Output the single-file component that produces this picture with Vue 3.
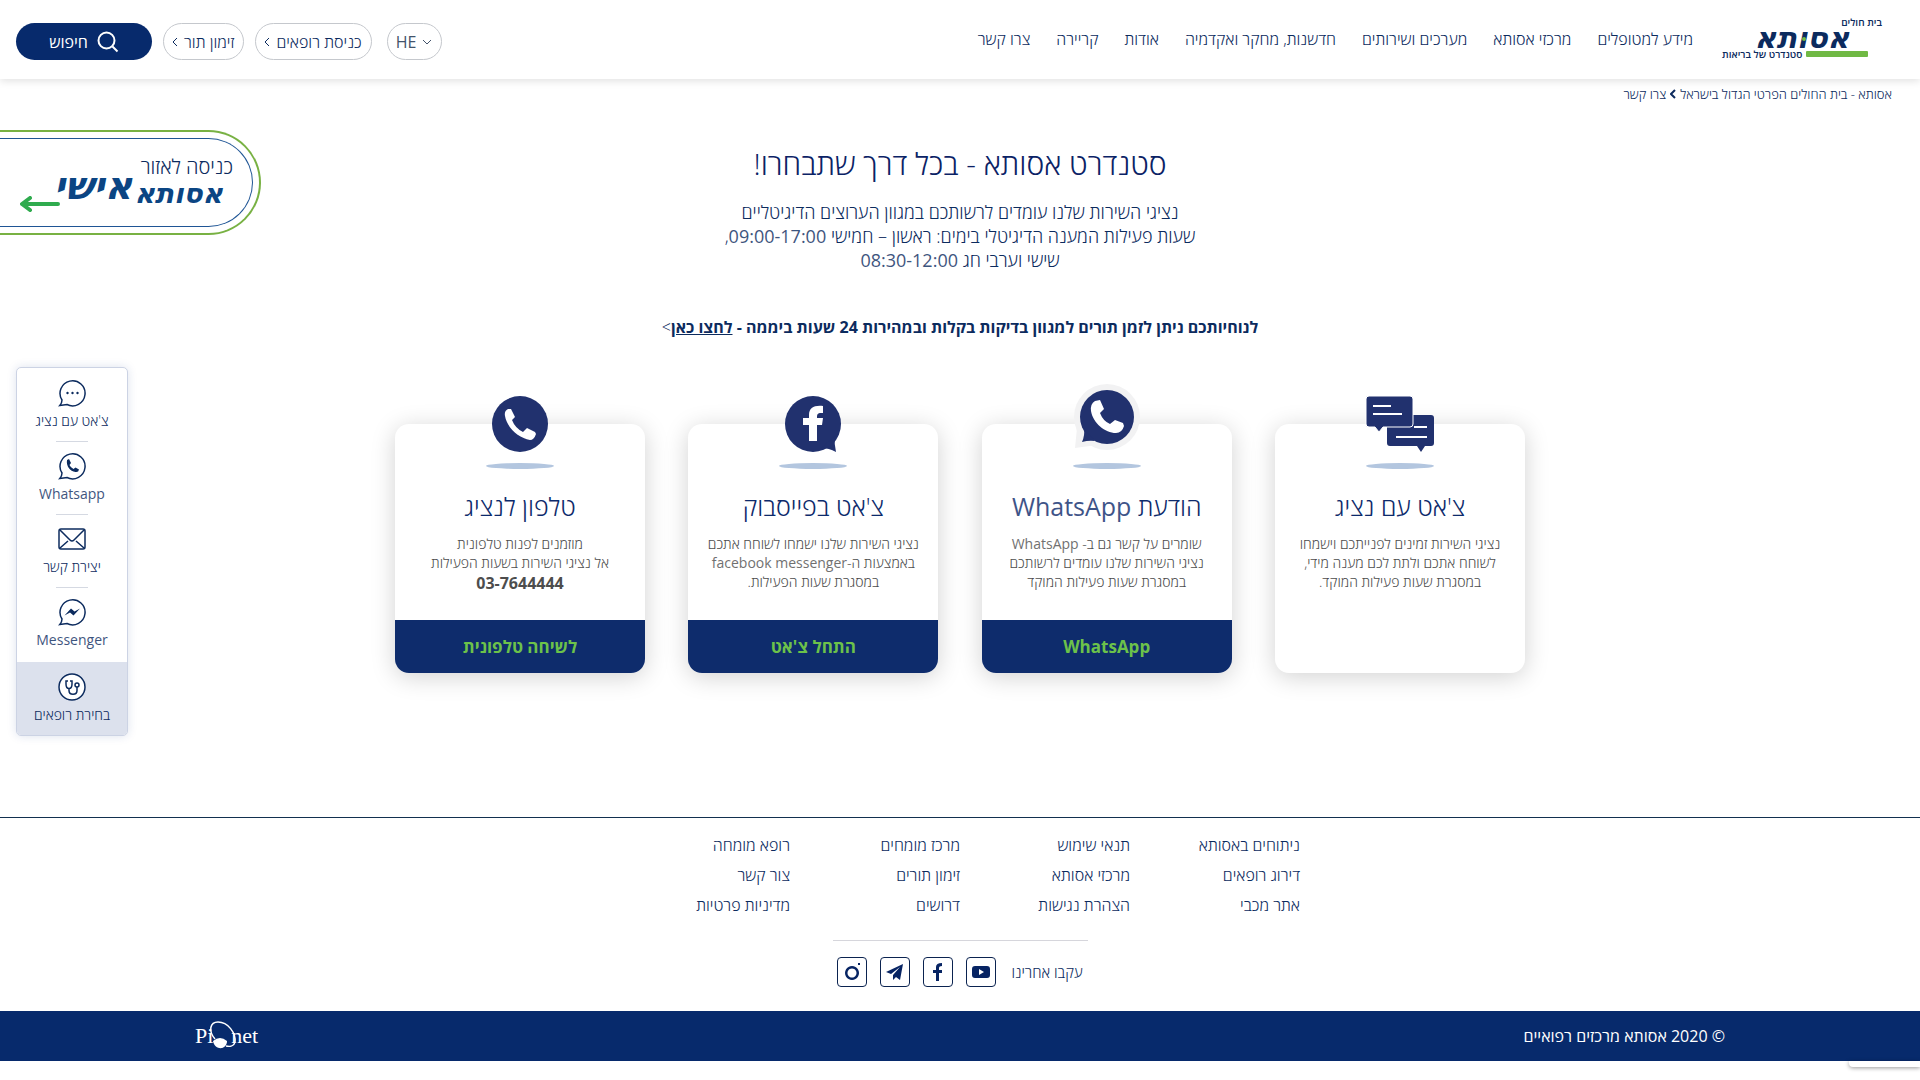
<template>
  <div class="page" dir="rtl" lang="he">
    <header class="top-bar">
      <a href="#" class="logo" aria-label="אסותא">
        <span class="logo-over">בית חולים</span>
        <span class="logo-word">אסותא</span>
        <span class="logo-under"><i class="logo-line"></i>סטנדרט של בריאות</span>
      </a>
      <nav class="main-nav">
        <a v-for="item in navItems" :key="item" href="#">{{ item }}</a>
      </nav>
      <div class="actions">
        <button type="button" class="pill lang">
          <svg width="10" height="6" viewBox="0 0 10 6"><path d="M1 1l4 4 4-4" /></svg>
          HE
        </button>
        <a href="#" class="pill">
          כניסת רופאים
          <svg width="6" height="10" viewBox="0 0 6 10"><path d="M5 1L1 5l4 4" /></svg>
        </a>
        <a href="#" class="pill">
          זימון תור
          <svg width="6" height="10" viewBox="0 0 6 10"><path d="M5 1L1 5l4 4" /></svg>
        </a>
        <button type="button" class="search">
          <svg width="22" height="22" viewBox="0 0 22 22"><circle cx="9.500" cy="9.500" r="8" /><path d="M15.500 15.500l5 5" /></svg>
          חיפוש
        </button>
      </div>
    </header>

    <nav class="breadcrumb" aria-label="breadcrumb">
      <a href="#">אסותא - בית החולים הפרטי הגדול בישראל</a>
      <svg width="6" height="10" viewBox="0 0 6 10"><path d="M5 1L1 5l4 4" /></svg>
      <span>צרו קשר</span>
    </nav>

    <a href="#" class="personal">
      <span class="personal-inner">
        <span class="personal-title">כניסה לאזור</span>
        <span class="personal-logo">
          <span class="word-small">אסותא</span>
          <span class="word-big">אישי</span>
        </span>
        <svg class="personal-arrow" width="40" height="16" viewBox="0 0 40 16"><path d="M38 8H3M10 2L2 8l8 6" /></svg>
      </span>
    </a>

    <aside class="side-menu">
      <a v-for="item in sideItems" :key="item.icon" href="#" class="side-item" :class="{ active: item.icon === 'doctor' }">
        <svg width="28" height="28" viewBox="0 0 28 28">
          <template v-if="item.icon === 'mail'">
            <rect x="1" y="4" width="26" height="20" rx="2" />
            <path d="M2 5l10 10q2 2 4 0L26 5M2 23l8-7M26 23l-8-7" />
          </template>
          <template v-else-if="item.icon === 'doctor'">
            <circle cx="14" cy="14" r="13" />
            <path d="M10 8H8v3c0 6 6 6 6 0V8h-2M11 15.500v2c0 5 8 5 8 0V14" />
            <circle cx="19" cy="12" r="2" />
          </template>
          <template v-else>
            <path d="M4 21A12.500 12.500 0 1 1 9 25.500L1.800 26.500Q4 24 4 21z" />
            <g v-if="item.icon === 'chat'" class="solid">
              <circle cx="9.500" cy="14" r="1.200" /><circle cx="14.500" cy="14" r="1.200" /><circle cx="19.500" cy="14" r="1.200" />
            </g>
            <path v-if="item.icon === 'whatsapp'" class="solid" d="M9 8l2-1 2 4-1.500 2q1 2.500 4 4l2-1.500 3.500 2q-.500 3-3.500 2.500C12 19.500 8 14 9 8z" />
            <path v-if="item.icon === 'messenger'" class="solid" d="M6.500 17.500l6.500-7 3.500 3 5.500-3-6.500 7-3.500-3z" />
          </template>
        </svg>
        <span :class="{ latin: isLatin(item.label) }">{{ item.label }}</span>
      </a>
    </aside>

    <main class="content">
      <h1>סטנדרט אסותא - בכל דרך שתבחרו!</h1>
      <p class="intro">
        נציגי השירות שלנו עומדים לרשותכם במגוון הערוצים הדיגיטליים<br />
        שעות פעילות המענה הדיגיטלי בימים: ראשון – חמישי <span class="latin">09:00-17:00</span>,<br />
        שישי וערבי חג <span class="latin">08:30-12:00</span>
      </p>
      <p class="notice">
        <b>לנוחיותכם ניתן לזמן תורים למגוון בדיקות בקלות ובמהירות 24 שעות ביממה - <a href="#">לחצו כאן</a></b>&gt;
      </p>

      <section class="cards">
        <article v-for="card in cards" :key="card.icon" class="card">
          <svg class="card-icon" width="80" height="88" viewBox="0 0 80 88">
            <g v-if="card.icon === 'chat'">
              <g class="badge">
                <path d="M30 27h41a3 3 0 0 1 3 3v25a3 3 0 0 1-3 3h-6l-4 6-4-6H30a3 3 0 0 1-3-3V30a3 3 0 0 1 3-3z" />
                <path class="front" d="M9 8h41a3 3 0 0 1 3 3v25a3 3 0 0 1-3 3H23l-4 5-4-5H9a3 3 0 0 1-3-3V11a3 3 0 0 1 3-3z" />
              </g>
              <path class="lines" d="M13 18h18M13 26h29M54 39h13M36 49h31" />
            </g>
            <g v-if="card.icon === 'whatsapp'">
              <circle class="halo" cx="40" cy="29" r="33" />
              <path class="halo" d="M10 40l-2 20 22-3z" />
              <circle class="badge" cx="40" cy="29" r="27" />
              <path class="badge" d="M17 41q1 6-2 13 7-2 13-1z" />
              <path class="white" d="M28 13q-5 3-4 10c2 12 14 22 25 22q6 0 8-7l-1-3-8-3-5 4q-7-3-10-11l4-4-4-9z" />
            </g>
            <g v-if="card.icon === 'facebook'">
              <circle class="badge" cx="40" cy="36" r="28" />
              <path class="badge" d="M48 60q8 0 15 4-2-8-1-16z" />
              <path class="white" d="M36 53V37h-6v-7h6v-3c0-7 5-10 14-9v7c-5 0-6 0-6 5h6l-1 7h-5v16z" />
            </g>
            <g v-if="card.icon === 'phone'">
              <circle class="badge" cx="40" cy="36" r="28" />
              <path class="white" d="M28 21q-4 2-3 7c2 12 14 22 25 24q4 0 6-6l-1-2-8-4-4 4q-8-4-11-12l3-3-4-8z" />
            </g>
            <ellipse class="shade" cx="40" cy="78" rx="34" ry="3" />
          </svg>
          <h2>
            <span v-for="part in splitLatin(card.title)" :key="part" :class="{ latin: isLatin(part) }">{{ part }}</span>
          </h2>
          <p>
            <template v-for="line in card.lines" :key="line">
              <span v-for="part in splitLatin(line)" :key="part" :class="{ latin: isLatin(part) }">{{ part }}</span><br />
            </template>
            <strong v-if="card.phone">{{ card.phone }}</strong>
          </p>
          <a v-if="card.action" href="#" class="card-action">{{ card.action }}</a>
        </article>
      </section>
    </main>

    <footer>
      <div class="footer-links">
        <ul v-for="(column, i) in footerColumns" :key="i">
          <li v-for="link in column" :key="link"><a href="#">{{ link }}</a></li>
        </ul>
      </div>
      <div class="social">
        <span>עקבו אחרינו</span>
        <a v-for="(path, name) in socialIcons" :key="name" href="#" :aria-label="name">
          <svg width="20" height="20" viewBox="0 0 20 20"><path :d="path" fill-rule="evenodd" /></svg>
        </a>
      </div>
      <div class="bottom-bar">
        <span>© 2020 אסותא מרכזים רפואיים</span>
        <a href="#" class="pionet" dir="ltr" aria-label="Pionet">
          Pi<svg width="18" height="30" viewBox="0 0 18 30">
            <path d="M0 20q7-6 14 0c0 9-12 10-14 0z" fill="#fff" />
            <path d="M2 18C-5 10-3 1 5 1c10 0 18 11 17 20-1 4-5 5-9 4" fill="none" stroke="#fff" stroke-width="1.500" />
          </svg>net
        </a>
      </div>
    </footer>
    <div class="corner-tab"></div>
  </div>
</template>

<script setup>
const navItems = ['מידע למטופלים', 'מרכזי אסותא', 'מערכים ושירותים', 'חדשנות, מחקר ואקדמיה', 'אודות', 'קריירה', 'צרו קשר'];

const sideItems = [
  { icon: 'chat', label: "צ'אט עם נציג" },
  { icon: 'whatsapp', label: 'Whatsapp' },
  { icon: 'mail', label: 'יצירת קשר' },
  { icon: 'messenger', label: 'Messenger' },
  { icon: 'doctor', label: 'בחירת רופאים' }
];

const cards = [
  {
    icon: 'chat',
    title: "צ'אט עם נציג",
    lines: ['נציגי השירות זמינים לפנייתכם וישמחו', 'לשוחח אתכם ולתת לכם מענה מידי,', 'במסגרת שעות פעילות המוקד.']
  },
  {
    icon: 'whatsapp',
    title: 'הודעת WhatsApp',
    lines: ['שומרים על קשר גם ב- WhatsApp', 'נציגי השירות שלנו עומדים לרשותכם', 'במסגרת שעות פעילות המוקד'],
    action: 'WhatsApp'
  },
  {
    icon: 'facebook',
    title: "צ'אט בפייסבוק",
    lines: ['נציגי השירות שלנו ישמחו לשוחח אתכם', 'באמצעות ה-facebook messenger', 'במסגרת שעות הפעילות.'],
    action: "התחל צ'אט"
  },
  {
    icon: 'phone',
    title: 'טלפון לנציג',
    lines: ['מוזמנים לפנות טלפונית', 'אל נציגי השירות בשעות הפעילות'],
    phone: '03-7644444',
    action: 'לשיחה טלפונית'
  }
];

const footerColumns = [
  ['ניתוחים באסותא', 'דירוג רופאים', 'אתר מכבי'],
  ['תנאי שימוש', 'מרכזי אסותא', 'הצהרת נגישות'],
  ['מרכז מומחים', 'זימון תורים', 'דרושים'],
  ['רופא מומחה', 'צור קשר', 'מדיניות פרטיות']
];

const socialIcons = {
  YouTube: 'M4 4h12q3 0 3 3v6q0 3-3 3H4q-3 0-3-3V7q0-3 3-3zM8 7v6l5-3z',
  Facebook: 'M8 19v-8H5V8h3V5q0-4 6-4v3q-3 0-3 2v2h3v3h-3v8z',
  Telegram: 'M18 2L1 10l5 2 9-7-7 8v5l3-3 4 3z',
  Instagram: 'M10 4a7 7 0 1 0 .01 0zM10 6.500a4.500 4.500 0 1 1-.01 0zM16 1h2v2h-2z'
};

// latin runs are set one weight heavier than the light hebrew
function isLatin(text) {
  return /^[a-z]/i.test(text);
}

function splitLatin(text) {
  return text.split(/([a-z][a-z ]*)/i).filter(Boolean);
}
</script>

<style>
body {
  margin: 0;
  background: #fff;
}
</style>

<style scoped>
.page {
  position: relative;
  min-height: 100vh;
  font-family: "Open Sans", "Liberation Sans", sans-serif;
  font-size: 16px;
  font-weight: 300;
  color: #0c2b5e;
}

a {
  color: inherit;
  text-decoration: none;
}

button {
  font: inherit;
  color: inherit;
  cursor: pointer;
}

svg {
  flex: none;
  fill: none;
  stroke: currentColor;
}

.latin {
  font-weight: 400;
  opacity: 0.8;
}

.top-bar {
  display: flex;
  align-items: center;
  height: 79px;
  padding: 0 38px 0 16px;
  box-sizing: border-box;
  box-shadow: 0 2px 8px rgba(0, 0, 0, 0.12);
}

.logo {
  display: flex;
  flex-direction: column;
  width: 160px;
  font-size: 10px;
  font-weight: 600;
  line-height: 10px;
}

.logo-over {
  margin-top: -4px;
}

.logo-word {
  position: relative;
  font-family: "DejaVu Sans", sans-serif;
  font-size: 30px;
  font-weight: 700;
  font-style: italic;
  line-height: 22px;
  text-align: center;
}

.logo-word::after {
  content: "";
  position: absolute;
  top: 10px;
  left: 80px;
  width: 4px;
  height: 4px;
  border-radius: 50%;
  background: #70b944;
}

.logo-under {
  display: flex;
  align-items: center;
  justify-content: flex-end;
  gap: 4px;
  white-space: nowrap;
}

.logo-line {
  width: 62px;
  height: 6px;
  background: #70b944;
  border-radius: 1px;
}

.main-nav {
  display: flex;
  gap: 26px;
  margin-right: 29px;
  padding-bottom: 2px;
}

.actions {
  display: flex;
  align-items: center;
  gap: 11px;
  margin-right: auto;
  padding-top: 4px;
}

.pill {
  display: flex;
  align-items: center;
  gap: 6px;
  height: 37px;
  padding: 0 9px 0 8px;
  box-sizing: border-box;
  border: 1px solid #c5c8cd;
  border-radius: 19px;
  background: #fff;
}

.lang {
  margin-left: 4px;
  font-weight: 400;
  color: #43536b;
}

.search {
  display: flex;
  align-items: center;
  justify-content: center;
  gap: 9px;
  width: 136px;
  height: 37px;
  padding: 0;
  border: 0;
  border-radius: 19px;
  background: #072a6c;
  color: #fff;
  font-weight: 400;
}

.search svg {
  stroke-width: 2;
}

.breadcrumb {
  display: flex;
  align-items: center;
  gap: 4px;
  padding: 6px 28px 0;
  font-size: 13px;
  line-height: 18px;
}

.breadcrumb svg {
  stroke-width: 2;
}

.personal {
  position: absolute;
  top: 130px;
  left: 0;
  width: 261px;
  height: 105px;
  padding: 6px 6px 6px 0;
  box-sizing: border-box;
  border: 2px solid #78b143;
  border-left: 0;
  border-radius: 0 53px 53px 0;
}

.personal-inner {
  position: relative;
  display: flex;
  flex-direction: column;
  height: 100%;
  padding: 14px 19px 0 0;
  box-sizing: border-box;
  border: 1px solid #1f5595;
  border-left: 0;
  border-radius: 0 45px 45px 0;
}

.personal-title {
  font-size: 20px;
  line-height: 28px;
}

.personal-logo {
  display: flex;
  align-items: flex-start;
  gap: 2px;
  padding-right: 10px;
  font-family: "DejaVu Sans", sans-serif;
  font-weight: 700;
  font-style: italic;
  line-height: 26px;
  color: #0b4583;
}

.word-small {
  font-size: 28px;
}

.word-big {
  font-size: 38px;
  line-height: 10px;
}

.personal-arrow {
  position: absolute;
  left: 20px;
  bottom: 14px;
  stroke: #2fab4e;
  stroke-width: 4;
  stroke-linecap: round;
  stroke-linejoin: round;
}

.side-menu {
  position: absolute;
  top: 367px;
  left: 16px;
  width: 112px;
  box-sizing: border-box;
  border: 1px solid #ccd3e4;
  border-radius: 5px;
  background: #fff;
  box-shadow: 0 0 10px rgba(30, 60, 140, 0.15);
  overflow: hidden;
}

.side-item {
  display: flex;
  flex-direction: column;
  align-items: center;
  gap: 3px;
  height: 73px;
  padding-top: 11px;
  box-sizing: border-box;
  font-size: 14px;
  line-height: 22px;
}

.side-item:not(:first-child):not(.active) {
  background: linear-gradient(#d5d9e2, #d5d9e2) center top / 32px 1px no-repeat;
}

.side-item svg {
  stroke-width: 1.5;
}

.side-item .solid {
  fill: currentColor;
  stroke: none;
}

.active {
  margin-top: 2px;
  background: #dce1ed;
}

.active svg circle:first-child {
  fill: #fff;
}

.content {
  display: flex;
  flex-direction: column;
  align-items: center;
  padding: 39px 0 144px;
  text-align: center;
}

h1 {
  margin: 0;
  font-size: 30px;
  font-weight: 300;
  line-height: 44px;
  color: #0b2265;
}

.intro {
  margin: 14px 0 0;
  font-size: 18px;
  line-height: 24px;
}

.notice {
  margin: 43px 0 0;
  font-size: 16px;
  line-height: 24px;
}

.notice b {
  font-weight: 700;
}

.notice a {
  text-decoration: underline;
}

.cards {
  display: flex;
  justify-content: space-between;
  width: 1130px;
  max-width: 100%;
  margin-top: 85px;
}

.card {
  position: relative;
  display: flex;
  flex-direction: column;
  width: 250px;
  height: 249px;
  padding-top: 62px;
  box-sizing: border-box;
  border-radius: 14px;
  background: #fff;
  box-shadow: 0 4px 24px rgba(0, 0, 0, 0.18);
}

.card-icon {
  position: absolute;
  top: -36px;
  left: 85px;
  overflow: visible;
  stroke: none;
}

.badge {
  fill: #21316e;
}

.front {
  stroke: #fff;
  stroke-width: 1;
}

.white {
  fill: #fff;
}

.halo {
  fill: #f2f2f3;
}

.lines {
  stroke: #fff;
  stroke-width: 2;
}

.shade {
  fill: #b3c6df;
}

.card h2 {
  margin: 0;
  font-size: 25px;
  font-weight: 300;
  line-height: 40px;
  color: #0d2a6b;
}

.card p {
  margin: 8px 0 0;
  font-size: 14px;
  line-height: 19px;
  color: #4d4d4d;
  white-space: nowrap;
}

.card strong {
  font-size: 16px;
  font-weight: 700;
  line-height: 22px;
}

.card-action {
  margin-top: auto;
  border-radius: 0 0 14px 14px;
  background: #0e2c6c;
  font-size: 17px;
  font-weight: 700;
  line-height: 53px;
  color: #6cc24a;
}

footer {
  border-top: 1px solid #12304f;
}

.footer-links {
  display: grid;
  grid-template-columns: repeat(4, 170px);
  justify-content: center;
  padding: 12px 0 20px;
}

ul {
  margin: 0;
  padding: 0;
  list-style: none;
}

li {
  line-height: 30px;
}

.social {
  display: flex;
  align-items: center;
  justify-content: center;
  gap: 13px;
  width: 255px;
  margin: 0 auto;
  padding: 16px 0 24px;
  border-top: 1px solid #d6d6dc;
}

.social span {
  margin-left: 2px;
  font-size: 15px;
}

.social a {
  display: flex;
  align-items: center;
  justify-content: center;
  width: 30px;
  height: 30px;
  box-sizing: border-box;
  border: 1px solid #0b2350;
  border-radius: 4px;
}

.social svg {
  fill: #072463;
  stroke: none;
}

.bottom-bar {
  display: flex;
  align-items: center;
  justify-content: space-between;
  height: 50px;
  padding: 0 195px;
  background: #072a6c;
  color: #fff;
  font-weight: 400;
}

.pionet {
  display: flex;
  align-items: center;
  font-family: "Liberation Serif", serif;
  font-size: 22px;
}

.pionet svg {
  overflow: visible;
  stroke: none;
}

.corner-tab {
  width: 71px;
  height: 6px;
  border-radius: 0 0 0 4px;
  box-shadow: 0 1px 4px rgba(0, 0, 0, 0.4);
}
</style>
